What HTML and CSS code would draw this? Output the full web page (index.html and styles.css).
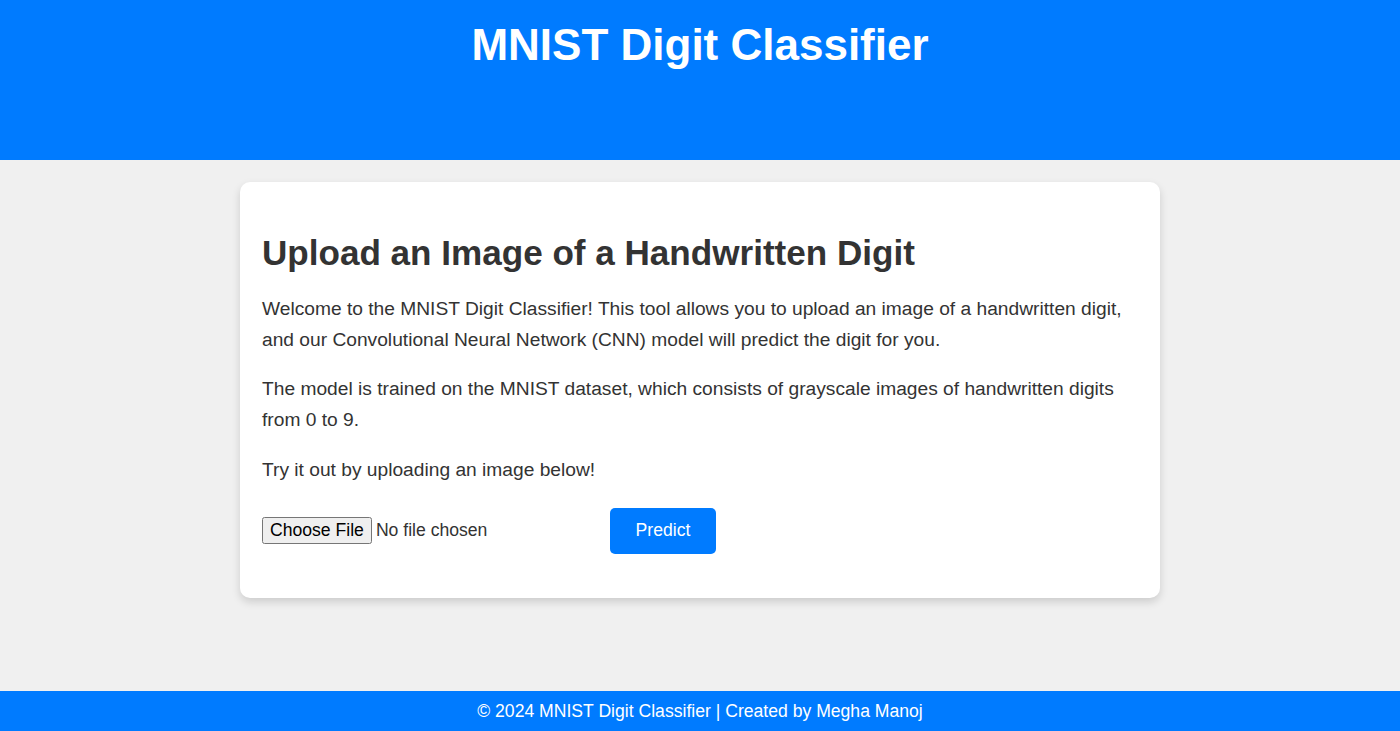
FILE: index.html
```html
<!DOCTYPE html>
<html lang="en">
<head>
<meta charset="utf-8">
<title>MNIST Digit Classifier</title>
<link rel="stylesheet" href="styles.css">
</head>
<body>
<header class="site-header">
  <h1 class="site-title">MNIST Digit Classifier</h1>
</header>
<main class="main">
  <section class="card">
    <h2 class="card-title">Upload an Image of a Handwritten Digit</h2>
    <p class="text">Welcome to the MNIST Digit Classifier! This tool allows you to upload an image of a handwritten digit, and our Convolutional Neural Network (CNN) model will predict the digit for you.</p>
    <p class="text">The model is trained on the MNIST dataset, which consists of grayscale images of handwritten digits from 0 to 9.</p>
    <p class="text">Try it out by uploading an image below!</p>
    <form class="upload-form" onsubmit="return false;">
      <input class="file-input" type="file" accept="image/*">
      <button class="predict-btn" type="submit">Predict</button>
    </form>
  </section>
</main>
<footer class="site-footer">© 2024 MNIST Digit Classifier | Created by Megha Manoj</footer>
</body>
</html>
```
FILE: styles.css
```css
* { box-sizing: border-box; }
html, body { margin: 0; padding: 0; }
body {
  font-family: "Liberation Sans", Arial, sans-serif;
  background: #f0f0f0;
  color: #333;
  min-height: 100vh;
  display: flex;
  flex-direction: column;
}
.site-header {
  background: #007bff;
  color: #fff;
  height: 160px;
  padding-top: 20px;
  text-align: center;
}
.site-title {
  margin: 0;
  font-size: 44px;
  font-weight: bold;
}
.main {
  flex: 1;
  padding-top: 22px;
}
.card {
  width: 920px;
  margin: 0 auto;
  background: #fff;
  border-radius: 10px;
  box-shadow: 0 4px 8px rgba(0, 0, 0, 0.15);
  padding: 22px 22px 44px;
}
.card-title {
  font-size: 35.1px;
  margin: 29px 0 21px;
  color: #333;
}
.text {
  font-size: 19.2px;
  line-height: 1.6;
  margin: 0 0 19px;
}
.upload-form {
  display: flex;
  align-items: center;
  gap: 20px;
  margin-top: 22px;
}
.file-input {
  width: 328px;
  font-family: "Liberation Sans", Arial, sans-serif;
  font-size: 17.6px;
  color: #333;
}
.predict-btn {
  background: #007bff;
  color: #fff;
  border: none;
  border-radius: 5px;
  width: 106px;
  height: 46px;
  font-family: "Liberation Sans", Arial, sans-serif;
  font-size: 17.6px;
  cursor: pointer;
}
.site-footer {
  background: #007bff;
  color: #fff;
  text-align: center;
  height: 40px;
  line-height: 40px;
  font-size: 17.6px;
}
```
